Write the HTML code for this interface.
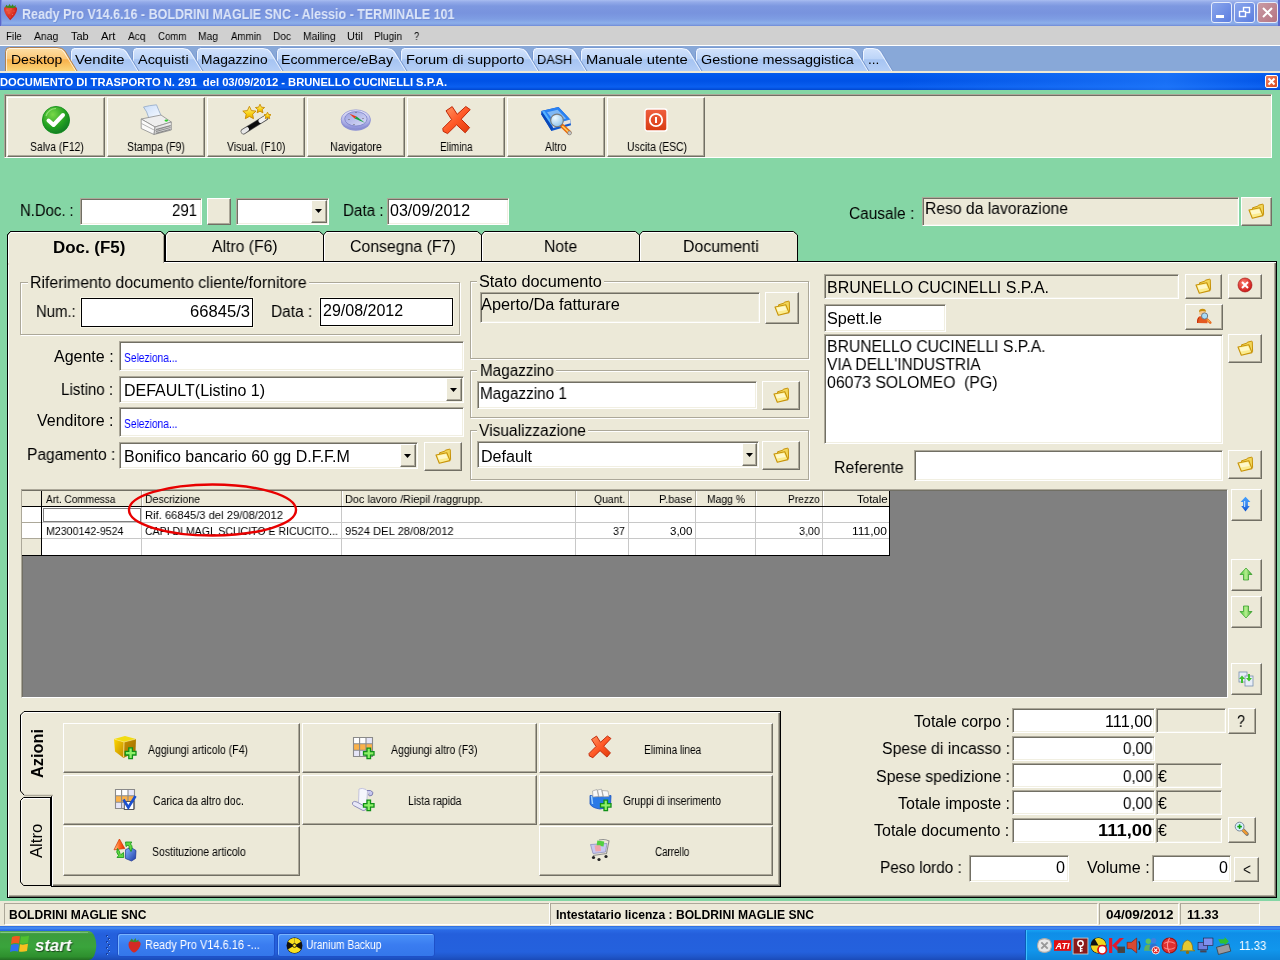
<!DOCTYPE html>
<html><head><meta charset="utf-8">
<style>
*{margin:0;padding:0;box-sizing:border-box}
html,body{width:1280px;height:960px;overflow:hidden;background:#85d6a5;font-family:"Liberation Sans",sans-serif;color:#000;position:relative}
.a{position:absolute}
.t{position:absolute;white-space:pre;line-height:1;will-change:transform}
.sk{position:absolute;background:#fff;border-top:1px solid #aca899;border-left:1px solid #aca899;border-bottom:1px solid #fff;border-right:1px solid #fff;box-shadow:inset 1px 1px 0 #716f64,inset -1px -1px 0 #f1efe2}
.sk.g{background:#ece9d8}
.rb{position:absolute;background:#ece9d8;border-top:1px solid #fff;border-left:1px solid #fff;border-bottom:1px solid #716f64;border-right:1px solid #716f64;box-shadow:inset -1px -1px 0 #aca899}
svg{position:absolute;overflow:visible}
</style></head>
<body>
<div class="a" style="left:0px;top:0px;width:1280px;height:26px;background:linear-gradient(#a9bdf0 0,#94abe9 2px,#7d98e0 6px,#7893de 13px,#7e9de3 19px,#8cafea 23px,#7f9de0 25px,#6a86d6 26px)"></div>
<div class="a" style="left:0px;top:0px;width:1px;height:26px;background:#5a68cc"></div>
<div class="a" style="left:1px;top:0px;width:1px;height:26px;background:#7c90dc"></div>
<div class="a" style="left:1278px;top:0px;width:2px;height:26px;background:#5a68cc"></div>
<svg style="left:3px;top:3px" width="16" height="18" viewBox="0 0 16 18">
<defs><radialGradient id="sb" cx=".35" cy=".3" r=".8"><stop offset="0" stop-color="#f05a40"/><stop offset=".6" stop-color="#d82a20"/><stop offset="1" stop-color="#b01818"/></radialGradient></defs>
<path d="M1 5.5 Q1 3.8 3 3.8 L7 3.6 Q9 3.4 11 3.8 L12.6 4 Q14.3 4.3 14.1 6.2 Q13.6 11.2 7.2 17.2 Q1.6 11.5 1 6.8 Z" fill="url(#sb)"/>
<g fill="#f8b0a0" opacity=".6"><circle cx="4" cy="7" r=".5"/><circle cx="8" cy="6" r=".5"/><circle cx="11" cy="8" r=".5"/><circle cx="6" cy="10" r=".5"/><circle cx="9.5" cy="11.5" r=".5"/><circle cx="7" cy="14" r=".5"/></g>
<path d="M2 4.2 L3.5 1.8 L5 3.5 L6.5 1 L8 3.2 L9.8 1.2 L10.8 3.4 L12.8 2 L12.4 4.4 Q7 5.6 2 4.2Z" fill="#3a8a20"/>
</svg>
<div class="t" style="left:22px;top:5.65px;font:bold 14px 'Liberation Sans';color:#dde6f8;transform:scaleX(0.8934);transform-origin:0 0;text-shadow:1px 1px 0 rgba(90,116,196,.35);">Ready Pro V14.6.16 - BOLDRINI MAGLIE SNC - Alessio - TERMINALE 101</div>
<div class="a" style="left:1211px;top:2px;width:21px;height:21px;border:1px solid #e6ecfb;border-radius:3px;background:linear-gradient(135deg,#8aa6ec,#5b7de0)"></div>
<div class="a" style="left:1234px;top:2px;width:21px;height:21px;border:1px solid #e6ecfb;border-radius:3px;background:linear-gradient(135deg,#8aa6ec,#5b7de0)"></div>
<div class="a" style="left:1257px;top:2px;width:21px;height:21px;border:1px solid #e6ecfb;border-radius:3px;background:linear-gradient(135deg,#c99aa4,#b57482)"></div>
<div class="a" style="left:1216px;top:15px;width:8px;height:3px;background:#fff"></div>
<svg style="left:1234px;top:2px" width="21" height="21"><rect x="9.5" y="5.5" width="6" height="5" fill="none" stroke="#fff" stroke-width="1.4"/><rect x="5.5" y="9.5" width="6" height="5" fill="#6d8ce4" stroke="#fff" stroke-width="1.4"/></svg>
<svg style="left:1257px;top:2px" width="21" height="21"><path d="M6 6 L15 15 M15 6 L6 15" stroke="#fff" stroke-width="2"/></svg>
<div class="a" style="left:0px;top:26px;width:1280px;height:19px;background:#d0d0d0"></div>
<div class="a" style="left:0px;top:45px;width:1280px;height:1px;background:#fff"></div>
<div class="t" style="left:5.6px;top:30.19px;font:normal 11px 'Liberation Sans';color:#000;transform:scaleX(0.8914);transform-origin:0 0;">File</div>
<div class="t" style="left:33.7px;top:30.19px;font:normal 11px 'Liberation Sans';color:#000;transform:scaleX(0.9459);transform-origin:0 0;">Anag</div>
<div class="t" style="left:70.5px;top:30.19px;font:normal 11px 'Liberation Sans';color:#000;transform:scaleX(0.9867);transform-origin:0 0;">Tab</div>
<div class="t" style="left:100.5px;top:30.19px;font:normal 11px 'Liberation Sans';color:#000;transform:scaleX(1.0316);transform-origin:0 0;">Art</div>
<div class="t" style="left:127.5px;top:30.19px;font:normal 11px 'Liberation Sans';color:#000;transform:scaleX(0.9233);transform-origin:0 0;">Acq</div>
<div class="t" style="left:157.5px;top:30.19px;font:normal 11px 'Liberation Sans';color:#000;transform:scaleX(0.8800);transform-origin:0 0;">Comm</div>
<div class="t" style="left:198px;top:30.19px;font:normal 11px 'Liberation Sans';color:#000;transform:scaleX(0.9346);transform-origin:0 0;">Mag</div>
<div class="t" style="left:230.6px;top:30.19px;font:normal 11px 'Liberation Sans';color:#000;transform:scaleX(0.8882);transform-origin:0 0;">Ammin</div>
<div class="t" style="left:273px;top:30.19px;font:normal 11px 'Liberation Sans';color:#000;transform:scaleX(0.9202);transform-origin:0 0;">Doc</div>
<div class="t" style="left:303px;top:30.19px;font:normal 11px 'Liberation Sans';color:#000;transform:scaleX(0.9355);transform-origin:0 0;">Mailing</div>
<div class="t" style="left:346.8px;top:30.19px;font:normal 11px 'Liberation Sans';color:#000;transform:scaleX(0.9945);transform-origin:0 0;">Util</div>
<div class="t" style="left:374px;top:30.19px;font:normal 11px 'Liberation Sans';color:#000;transform:scaleX(0.9157);transform-origin:0 0;">Plugin</div>
<div class="t" style="left:414.3px;top:30.19px;font:normal 11px 'Liberation Sans';color:#000;transform:scaleX(0.8500);transform-origin:0 0;">?</div>
<div class="a" style="left:0px;top:46px;width:1280px;height:25px;background:#88a8d8"></div>
<div class="a" style="left:0px;top:71px;width:1280px;height:2px;background:#f0ead6"></div>
<svg style="left:0;top:46px" width="1280" height="26" viewBox="0 46 1280 26"><defs><linearGradient id="tb" x1="0" y1="0" x2="0" y2="1"><stop offset="0" stop-color="#d4e4fc"/><stop offset=".48" stop-color="#bcd4f8"/><stop offset=".52" stop-color="#a6c4f2"/><stop offset="1" stop-color="#b4cef6"/></linearGradient><linearGradient id="to" x1="0" y1="0" x2="0" y2="1"><stop offset="0" stop-color="#fde0a8"/><stop offset=".48" stop-color="#fcc878"/><stop offset=".52" stop-color="#f8b04a"/><stop offset="1" stop-color="#fbd67a"/></linearGradient></defs><path d="M862.5 71 L862.5 51.5 Q862.5 47.5 866.5 47.5 L873 47.5 Q878.5 47.5 881 51.0 L893 71 Z" fill="url(#tb)"/><path d="M863.5 71 L863.5 52.0 Q863.5 48.5 867 48.5 L873 48.5 Q878 48.5 880 52.0 L891.8 71" fill="none" stroke="#fff" stroke-opacity=".7" stroke-width="1"/><path d="M862.5 71 L862.5 51.5 Q862.5 47.5 866.5 47.5 L873 47.5 Q878.5 47.5 881 51.0 L893 71" fill="none" stroke="#7a9ad0" stroke-width="1"/><path d="M695.5 71 L695.5 51.5 Q695.5 47.5 699.5 47.5 L849 47.5 Q854.5 47.5 857 51.0 L869 71 Z" fill="url(#tb)"/><path d="M696.5 71 L696.5 52.0 Q696.5 48.5 700 48.5 L849 48.5 Q854 48.5 856 52.0 L867.8 71" fill="none" stroke="#fff" stroke-opacity=".7" stroke-width="1"/><path d="M695.5 71 L695.5 51.5 Q695.5 47.5 699.5 47.5 L849 47.5 Q854.5 47.5 857 51.0 L869 71" fill="none" stroke="#7a9ad0" stroke-width="1"/><path d="M580.5 71 L580.5 51.5 Q580.5 47.5 584.5 47.5 L682 47.5 Q687.5 47.5 690 51.0 L702 71 Z" fill="url(#tb)"/><path d="M581.5 71 L581.5 52.0 Q581.5 48.5 585 48.5 L682 48.5 Q687 48.5 689 52.0 L700.8 71" fill="none" stroke="#fff" stroke-opacity=".7" stroke-width="1"/><path d="M580.5 71 L580.5 51.5 Q580.5 47.5 584.5 47.5 L682 47.5 Q687.5 47.5 690 51.0 L702 71" fill="none" stroke="#7a9ad0" stroke-width="1"/><path d="M532.5 71 L532.5 51.5 Q532.5 47.5 536.5 47.5 L567 47.5 Q572.5 47.5 575 51.0 L587 71 Z" fill="url(#tb)"/><path d="M533.5 71 L533.5 52.0 Q533.5 48.5 537 48.5 L567 48.5 Q572 48.5 574 52.0 L585.8 71" fill="none" stroke="#fff" stroke-opacity=".7" stroke-width="1"/><path d="M532.5 71 L532.5 51.5 Q532.5 47.5 536.5 47.5 L567 47.5 Q572.5 47.5 575 51.0 L587 71" fill="none" stroke="#7a9ad0" stroke-width="1"/><path d="M400.5 71 L400.5 51.5 Q400.5 47.5 404.5 47.5 L519 47.5 Q524.5 47.5 527 51.0 L539 71 Z" fill="url(#tb)"/><path d="M401.5 71 L401.5 52.0 Q401.5 48.5 405 48.5 L519 48.5 Q524 48.5 526 52.0 L537.8 71" fill="none" stroke="#fff" stroke-opacity=".7" stroke-width="1"/><path d="M400.5 71 L400.5 51.5 Q400.5 47.5 404.5 47.5 L519 47.5 Q524.5 47.5 527 51.0 L539 71" fill="none" stroke="#7a9ad0" stroke-width="1"/><path d="M276.5 71 L276.5 51.5 Q276.5 47.5 280.5 47.5 L387 47.5 Q392.5 47.5 395 51.0 L407 71 Z" fill="url(#tb)"/><path d="M277.5 71 L277.5 52.0 Q277.5 48.5 281 48.5 L387 48.5 Q392 48.5 394 52.0 L405.8 71" fill="none" stroke="#fff" stroke-opacity=".7" stroke-width="1"/><path d="M276.5 71 L276.5 51.5 Q276.5 47.5 280.5 47.5 L387 47.5 Q392.5 47.5 395 51.0 L407 71" fill="none" stroke="#7a9ad0" stroke-width="1"/><path d="M196.5 71 L196.5 51.5 Q196.5 47.5 200.5 47.5 L263 47.5 Q268.5 47.5 271 51.0 L283 71 Z" fill="url(#tb)"/><path d="M197.5 71 L197.5 52.0 Q197.5 48.5 201 48.5 L263 48.5 Q268 48.5 270 52.0 L281.8 71" fill="none" stroke="#fff" stroke-opacity=".7" stroke-width="1"/><path d="M196.5 71 L196.5 51.5 Q196.5 47.5 200.5 47.5 L263 47.5 Q268.5 47.5 271 51.0 L283 71" fill="none" stroke="#7a9ad0" stroke-width="1"/><path d="M132.5 71 L132.5 51.5 Q132.5 47.5 136.5 47.5 L183 47.5 Q188.5 47.5 191 51.0 L203 71 Z" fill="url(#tb)"/><path d="M133.5 71 L133.5 52.0 Q133.5 48.5 137 48.5 L183 48.5 Q188 48.5 190 52.0 L201.8 71" fill="none" stroke="#fff" stroke-opacity=".7" stroke-width="1"/><path d="M132.5 71 L132.5 51.5 Q132.5 47.5 136.5 47.5 L183 47.5 Q188.5 47.5 191 51.0 L203 71" fill="none" stroke="#7a9ad0" stroke-width="1"/><path d="M70.5 71 L70.5 51.5 Q70.5 47.5 74.5 47.5 L119 47.5 Q124.5 47.5 127 51.0 L139 71 Z" fill="url(#tb)"/><path d="M71.5 71 L71.5 52.0 Q71.5 48.5 75 48.5 L119 48.5 Q124 48.5 126 52.0 L137.8 71" fill="none" stroke="#fff" stroke-opacity=".7" stroke-width="1"/><path d="M70.5 71 L70.5 51.5 Q70.5 47.5 74.5 47.5 L119 47.5 Q124.5 47.5 127 51.0 L139 71" fill="none" stroke="#7a9ad0" stroke-width="1"/><path d="M5.5 71 L5.5 51.5 Q5.5 47.5 9.5 47.5 L57 47.5 Q62.5 47.5 65 51.0 L77 71 Z" fill="url(#to)"/><path d="M6.5 71 L6.5 52.0 Q6.5 48.5 10 48.5 L57 48.5 Q62 48.5 64 52.0 L75.8 71" fill="none" stroke="#fff" stroke-opacity=".7" stroke-width="1"/><path d="M5.5 71 L5.5 51.5 Q5.5 47.5 9.5 47.5 L57 47.5 Q62.5 47.5 65 51.0 L77 71" fill="none" stroke="#b08050" stroke-width="1"/></svg>
<div class="t" style="left:10.5px;top:51.50px;font:normal 13px 'Liberation Sans';color:#000;transform:scaleX(1.0778);transform-origin:0 0;">Desktop</div>
<div class="t" style="left:75px;top:51.50px;font:normal 13px 'Liberation Sans';color:#000;transform:scaleX(1.1412);transform-origin:0 0;">Vendite</div>
<div class="t" style="left:138px;top:51.50px;font:normal 13px 'Liberation Sans';color:#000;transform:scaleX(1.1116);transform-origin:0 0;">Acquisti</div>
<div class="t" style="left:201.4px;top:51.50px;font:normal 13px 'Liberation Sans';color:#000;transform:scaleX(1.0594);transform-origin:0 0;">Magazzino</div>
<div class="t" style="left:281px;top:51.50px;font:normal 13px 'Liberation Sans';color:#000;transform:scaleX(1.0917);transform-origin:0 0;">Ecommerce/eBay</div>
<div class="t" style="left:406px;top:51.50px;font:normal 13px 'Liberation Sans';color:#000;transform:scaleX(1.1224);transform-origin:0 0;">Forum di supporto</div>
<div class="t" style="left:537px;top:51.50px;font:normal 13px 'Liberation Sans';color:#000;transform:scaleX(0.9746);transform-origin:0 0;">DASH</div>
<div class="t" style="left:585.5px;top:51.50px;font:normal 13px 'Liberation Sans';color:#000;transform:scaleX(1.1348);transform-origin:0 0;">Manuale utente</div>
<div class="t" style="left:700.5px;top:51.50px;font:normal 13px 'Liberation Sans';color:#000;transform:scaleX(1.1064);transform-origin:0 0;">Gestione messaggistica</div>
<div class="t" style="left:867.6px;top:51.50px;font:normal 13px 'Liberation Sans';color:#000;transform:scaleX(1.0521);transform-origin:0 0;">...</div>
<div class="a" style="left:0px;top:73px;width:1280px;height:17px;background:linear-gradient(#0a5fe8 0,#0058ee 2px,#0052e6 8px,#0a5ff0 14px,#0047d0 17px)"></div>
<div class="a" style="left:900px;top:73px;width:380px;height:17px;background:linear-gradient(90deg,rgba(0,102,255,0) 0,rgba(40,130,255,.6) 70%,rgba(0,90,240,0) 100%)"></div>
<div class="t" style="left:0px;top:76.19px;font:bold 11px 'Liberation Sans';color:#fff;transform:scaleX(1.0171);transform-origin:0 0;">DOCUMENTO DI TRASPORTO N. 291  del 03/09/2012 - BRUNELLO CUCINELLI S.P.A.</div>
<div class="a" style="left:1265px;top:75px;width:13px;height:13px;border:1px solid #fff;border-radius:2px;background:linear-gradient(135deg,#f08060,#d84a20)"></div>
<svg style="left:1265px;top:75px" width="13" height="13"><path d="M3.5 3.5 L9.5 9.5 M9.5 3.5 L3.5 9.5" stroke="#fff" stroke-width="2"/></svg>
<div class="a" style="left:4px;top:94px;width:1268px;height:64px;background:#ece9d8;border-top:1px solid #aca899;border-left:1px solid #aca899;border-bottom:1px solid #fff;border-right:1px solid #fff;box-shadow:inset 1px 1px 0 #716f64"></div>
<div class="rb" style="left:7px;top:97px;width:98px;height:60px;"></div>
<div class="t" style="left:29.5px;top:140.34px;font:normal 12px 'Liberation Sans';color:#000;transform:scaleX(0.8691);transform-origin:0 0;">Salva (F12)</div>
<div class="rb" style="left:107px;top:97px;width:98px;height:60px;"></div>
<div class="t" style="left:127px;top:140.34px;font:normal 12px 'Liberation Sans';color:#000;transform:scaleX(0.8668);transform-origin:0 0;">Stampa (F9)</div>
<div class="rb" style="left:207px;top:97px;width:98px;height:60px;"></div>
<div class="t" style="left:227px;top:140.34px;font:normal 12px 'Liberation Sans';color:#000;transform:scaleX(0.8613);transform-origin:0 0;">Visual. (F10)</div>
<div class="rb" style="left:307px;top:97px;width:98px;height:60px;"></div>
<div class="t" style="left:330px;top:140.34px;font:normal 12px 'Liberation Sans';color:#000;transform:scaleX(0.8961);transform-origin:0 0;">Navigatore</div>
<div class="rb" style="left:407px;top:97px;width:98px;height:60px;"></div>
<div class="t" style="left:439.5px;top:140.34px;font:normal 12px 'Liberation Sans';color:#000;transform:scaleX(0.8260);transform-origin:0 0;">Elimina</div>
<div class="rb" style="left:507px;top:97px;width:98px;height:60px;"></div>
<div class="t" style="left:544.9px;top:140.34px;font:normal 12px 'Liberation Sans';color:#000;transform:scaleX(0.8633);transform-origin:0 0;">Altro</div>
<div class="rb" style="left:607px;top:97px;width:98px;height:60px;"></div>
<div class="t" style="left:626.5px;top:140.34px;font:normal 12px 'Liberation Sans';color:#000;transform:scaleX(0.8653);transform-origin:0 0;">Uscita (ESC)</div>
<svg style="left:40px;top:104px" width="32" height="32" viewBox="0 0 32 32">
<defs><radialGradient id="gc" cx=".38" cy=".3" r=".85"><stop offset="0" stop-color="#78d848"/><stop offset=".55" stop-color="#22a020"/><stop offset="1" stop-color="#0a6a28"/></radialGradient></defs>
<circle cx="16" cy="16" r="13.6" fill="url(#gc)" stroke="#0a8a14" stroke-width=".8"/><path d="M6 12 A11 11 0 0 1 16 4.5" stroke="#a8f090" stroke-width="1.2" fill="none" opacity=".7"/>
<path d="M8.5 16.5 L13.5 21 L23 11" stroke="#fff" stroke-width="4" fill="none" stroke-linecap="round" stroke-linejoin="round"/>
</svg>
<svg style="left:138px;top:102px" width="36" height="36" viewBox="138 102 36 36"><defs><linearGradient id="pp" x1="0" y1="0" x2="1" y2="1"><stop offset="0" stop-color="#c8dcf8"/><stop offset="1" stop-color="#f8fbff"/></linearGradient><linearGradient id="pf" x1="0" y1="0" x2="0" y2="1"><stop offset="0" stop-color="#f4f4f4"/><stop offset="1" stop-color="#c8c8c8"/></linearGradient></defs><path d="M143.5 107 Q149 105.5 156.5 104.8 Q158.5 110 161.5 116.5 L149 118.5 Q147 111 143.5 107Z" fill="url(#pp)" stroke="#90a8c8" stroke-width=".8"/><path d="M141.2 119 L161 115 L171.3 122 L155 127 Z" fill="#eeeeee" stroke="#8c8c8c" stroke-width=".8"/><path d="M141.2 119 L155 127 L154 134.5 L141.2 128.5 Z" fill="#fafafa" stroke="#8c8c8c" stroke-width=".8"/><path d="M155 127 L171.3 122 L171.3 130 L154 134.5 Z" fill="url(#pf)" stroke="#8c8c8c" stroke-width=".8"/><path d="M141.5 123.5 L155 130.5 L171 125.8" fill="none" stroke="#a0a0a0" stroke-width=".8"/><path d="M156 129.5 L170.5 125.5 M156 131.5 L170.5 127.5 M156 133.3 L170.5 129.3" stroke="#6a6a6a" stroke-width=".7"/><ellipse cx="166.3" cy="120.6" rx="1.8" ry="1.1" fill="#30d030"/></svg>
<svg style="left:238px;top:102px" width="36" height="36" viewBox="238 102 36 36"><defs><linearGradient id="sg" x1="0" y1="0" x2="0" y2="1"><stop offset="0" stop-color="#fff8a0"/><stop offset=".6" stop-color="#f8d010"/><stop offset="1" stop-color="#e8a800"/></linearGradient></defs><path d="M243.5 131.5 L265.5 117.8" stroke="#505050" stroke-width="5.6" stroke-linecap="round"/><path d="M243.5 131.5 L265.5 117.8" stroke="#0c0c0c" stroke-width="4.2" stroke-linecap="round"/><path d="M243.3 131.6 L247 129.3" stroke="#e8e8e8" stroke-width="4.2" stroke-linecap="round"/><path d="M260.5 120.9 L265.5 117.8" stroke="#f0f0f0" stroke-width="4.2" stroke-linecap="round"/><path d="M249.4 106.3 L251.4 110.6 L256 111.1 L252.6 114.2 L253.5 118.7 L249.4 116.4 L245.3 118.7 L246.2 114.2 L242.8 111.1 L247.4 110.6 Z" fill="url(#sg)" stroke="#c88a00" stroke-width=".9" stroke-linejoin="round"/><path d="M260 104.2 L261.4 107.2 L264.6 107.5 L262.2 109.6 L262.9 112.8 L260 111.2 L257.1 112.8 L257.8 109.6 L255.4 107.5 L258.6 107.2 Z" fill="url(#sg)" stroke="#c88a00" stroke-width=".9" stroke-linejoin="round"/><path d="M267.5 112.2 L268.6 114.5 L271 114.7 L269.2 116.3 L269.7 118.7 L267.5 117.5 L265.3 118.7 L265.8 116.3 L264 114.7 L266.4 114.5 Z" fill="url(#sg)" stroke="#c88a00" stroke-width=".9" stroke-linejoin="round"/></svg>
<svg style="left:338px;top:104px" width="36" height="30" viewBox="338 104 36 30"><defs><linearGradient id="cp" x1="0" y1="0" x2="0" y2="1"><stop offset="0" stop-color="#e8e8fc"/><stop offset="1" stop-color="#8a8ed8"/></linearGradient><linearGradient id="cd" x1="0" y1="0" x2="1" y2="1"><stop offset="0" stop-color="#9aa0e0"/><stop offset="1" stop-color="#dcdef8"/></linearGradient></defs><ellipse cx="355.8" cy="120.6" rx="14.8" ry="10.2" fill="#8c90d4"/><ellipse cx="355.8" cy="119.4" rx="14.6" ry="9.6" fill="url(#cp)" stroke="#8a8ed0" stroke-width=".7"/><ellipse cx="355.9" cy="118.8" rx="11.2" ry="7.2" fill="url(#cd)" stroke="#7a80c8" stroke-width=".8"/><path d="M349.5 113.8 L356.5 116.6 L354.6 118.4 Z" fill="#e83818"/><path d="M356.5 116.6 L364.8 122.8 L354.6 118.4 Z" fill="#18a040"/><circle cx="356" cy="112.5" r=".6" fill="#555"/><circle cx="363" cy="118.5" r=".6" fill="#555"/><circle cx="349" cy="119.5" r=".6" fill="#555"/><circle cx="354" cy="124.5" r=".6" fill="#555"/></svg>
<svg style="left:440px;top:104px" width="34" height="32" viewBox="440 104 34 32"><defs><linearGradient id="xg" x1="0" y1="0" x2="1" y2="1"><stop offset="0" stop-color="#ff9a68"/><stop offset=".5" stop-color="#ff5a28"/><stop offset="1" stop-color="#e03808"/></linearGradient></defs><path d="M446 110.8 L452.2 106.6 L457.2 114.3 L465.8 106.5 L470.2 109.6 L461.2 119.2 L469.6 127.6 L465.2 132.8 L456.6 124.8 L447.6 133.6 L443.2 131.4 L442.8 128.4 L451.6 119.6 Z" fill="url(#xg)" stroke="#c02808" stroke-width="1" stroke-linejoin="round"/></svg>
<svg style="left:538px;top:104px" width="36" height="32" viewBox="538 104 36 32"><defs><radialGradient id="lg" cx=".35" cy=".3" r=".8"><stop offset="0" stop-color="#f0faff"/><stop offset="1" stop-color="#88c0ea"/></radialGradient></defs><path d="M541.3 111 L558.5 107 L570.2 119.6 L571 125.3 L551.5 131 L541.3 114.5 Z" fill="#0f58d0"/><path d="M541.3 111 L558.5 107 L570.2 119.6 L552 124.5 Z" fill="#2a82f2"/><path d="M547 112.3 L557.6 109.8 L566.2 118.6 L554.6 121.6 Z" fill="#80b8f4"/><path d="M542.2 111.6 L544.4 111.1 L553.4 125 L551.6 125.6 Z" fill="#58b4ff"/><path d="M552 124.5 L570.2 119.6 L570.6 123.2 L553 128 Z" fill="#e4e4e4"/><path d="M541.3 114.5 L551.5 131 L553 128 L541.8 112" fill="#0a48b8"/><path d="M562.3 126 L569.3 132.6" stroke="#e86a10" stroke-width="4.4" stroke-linecap="round"/><path d="M562.3 126 L568.6 132" stroke="#ffd060" stroke-width="1.6"/><circle cx="569.6" cy="133" r="1.9" fill="#c8c8c8" stroke="#777" stroke-width=".6"/><circle cx="557" cy="120.4" r="6.3" fill="url(#lg)" stroke="#7a7a7a" stroke-width="1.1"/></svg>
<svg style="left:644px;top:108px" width="24" height="24" viewBox="0 0 24 24">
<defs><linearGradient id="pw" x1="0" y1="0" x2="0" y2="1"><stop offset="0" stop-color="#f06040"/><stop offset="1" stop-color="#d83a10"/></linearGradient></defs>
<rect x="1" y="1" width="22" height="22" rx="2.5" fill="url(#pw)" stroke="#fff" stroke-width="1.4"/>
<circle cx="12" cy="12" r="6.2" fill="none" stroke="#fff" stroke-width="1.8"/>
<path d="M12 9 L12 15" stroke="#fff" stroke-width="2"/>
</svg>
<div class="t" style="left:19.7px;top:201.96px;font:normal 16px 'Liberation Sans';color:#000;transform:scaleX(0.9292);transform-origin:0 0;">N.Doc. :</div>
<div class="sk" style="left:80px;top:198px;width:122px;height:27px;background:#fff;"></div>
<div class="t" style="left:172px;top:201.96px;font:normal 16px 'Liberation Sans';color:#000;transform:scaleX(0.9365);transform-origin:0 0;">291</div>
<div class="rb" style="left:207px;top:198px;width:24px;height:27px;"></div>
<div class="sk" style="left:236px;top:198px;width:93px;height:27px;background:#fff;"></div>
<div class="rb" style="left:311px;top:200px;width:16px;height:23px;"></div>
<svg style="left:315px;top:209px" width="8" height="5"><path d="M0 0 L7 0 L3.5 4Z" fill="#000"/></svg>
<div class="t" style="left:342.5px;top:201.96px;font:normal 16px 'Liberation Sans';color:#000;transform:scaleX(0.9488);transform-origin:0 0;">Data :</div>
<div class="sk" style="left:387px;top:198px;width:122px;height:27px;background:#fff;"></div>
<div class="t" style="left:390px;top:201.96px;font:normal 16px 'Liberation Sans';color:#000;">03/09/2012</div>
<div class="t" style="left:848.75px;top:204.96px;font:normal 16px 'Liberation Sans';color:#000;transform:scaleX(0.9653);transform-origin:0 0;">Causale :</div>
<div class="sk" style="left:922px;top:197px;width:317px;height:29px;background:#ece9d8;"></div>
<div class="t" style="left:925px;top:199.96px;font:normal 16px 'Liberation Sans';color:#000;transform:scaleX(0.9803);transform-origin:0 0;">Reso da lavorazione</div>
<div class="rb" style="left:1241px;top:197px;width:31px;height:29px;"></div>
<svg style="left:1248px;top:203px" width="18" height="17" viewBox="0 0 18 17">
<path d="M4.5 4.8 L9.8 3.2 L10.4 2.2 L14.4 1.2 Q15.3 1 15.3 2 L15.6 11.6 L6 14.2 Z" fill="#f2d658" stroke="#c8940a" stroke-width="1"/>
<path d="M1 7 L11.8 4.8 L15 12.6 L4.3 15.3 Z" fill="#fbec8e" stroke="#c8940a" stroke-width="1.1" stroke-linejoin="round"/>
<path d="M2.6 7.8 L11 6.2 L12.6 10 L3.8 11.6Z" fill="#fffbd8" opacity=".8"/>
</svg>
<svg style="left:165px;top:231px" width="159" height="31"><path d="M0.5 30.5 L0.5 4 L3.5 0.5 L154.5 0.5 L158.5 4 L158.5 30.5" fill="#ece9d8" stroke="#000" stroke-width="1"/><path d="M1.5 30 L1.5 4.5 L4 1.5 L154 1.5" fill="none" stroke="#fff" stroke-width="1"/></svg>
<div class="t" style="left:211.7px;top:237.96px;font:normal 16px 'Liberation Sans';color:#000;transform:scaleX(0.9839);transform-origin:0 0;">Altro (F6)</div>
<svg style="left:323px;top:231px" width="159" height="31"><path d="M0.5 30.5 L0.5 4 L3.5 0.5 L154.5 0.5 L158.5 4 L158.5 30.5" fill="#ece9d8" stroke="#000" stroke-width="1"/><path d="M1.5 30 L1.5 4.5 L4 1.5 L154 1.5" fill="none" stroke="#fff" stroke-width="1"/></svg>
<div class="t" style="left:350.4px;top:237.96px;font:normal 16px 'Liberation Sans';color:#000;transform:scaleX(0.9895);transform-origin:0 0;">Consegna (F7)</div>
<svg style="left:481px;top:231px" width="159" height="31"><path d="M0.5 30.5 L0.5 4 L3.5 0.5 L154.5 0.5 L158.5 4 L158.5 30.5" fill="#ece9d8" stroke="#000" stroke-width="1"/><path d="M1.5 30 L1.5 4.5 L4 1.5 L154 1.5" fill="none" stroke="#fff" stroke-width="1"/></svg>
<div class="t" style="left:544.4px;top:237.96px;font:normal 16px 'Liberation Sans';color:#000;transform:scaleX(0.9794);transform-origin:0 0;">Note</div>
<svg style="left:639px;top:231px" width="159" height="31"><path d="M0.5 30.5 L0.5 4 L3.5 0.5 L154.5 0.5 L158.5 4 L158.5 30.5" fill="#ece9d8" stroke="#000" stroke-width="1"/><path d="M1.5 30 L1.5 4.5 L4 1.5 L154 1.5" fill="none" stroke="#fff" stroke-width="1"/></svg>
<div class="t" style="left:683px;top:237.96px;font:normal 16px 'Liberation Sans';color:#000;transform:scaleX(0.9905);transform-origin:0 0;">Documenti</div>
<div class="a" style="left:7px;top:261px;width:1270px;height:637px;background:#ece9d8;border:1px solid #000;box-shadow:inset 1px 1px 0 #fff,inset -1px -1px 0 #716f64,inset -2px -2px 0 #aca899"></div>
<div class="a" style="left:9px;top:240px;width:154px;height:25px;background:#ece9d8"></div>
<svg style="left:7px;top:231px" width="159" height="34"><path d="M0.5 34 L0.5 4 L3.5 0.5 L154 0.5 L157.5 4 L157.5 31" fill="none" stroke="#000" stroke-width="1"/><path d="M1 34 L1 4 L3.5 1 L154 1 L157 4 L157 34Z" fill="#ece9d8"/><path d="M0.5 34 L0.5 4 L3.5 0.5 L154 0.5 L157.5 4 L157.5 31" fill="none" stroke="#000" stroke-width="1"/><path d="M1.5 32 L1.5 4.5 L4 1.5 L153.5 1.5" fill="none" stroke="#fff" stroke-width="1"/><path d="M156.5 4.5 L156.5 32" stroke="#aca899" stroke-width="1"/></svg>
<div class="t" style="left:52.9px;top:238.96px;font:bold 16px 'Liberation Sans';color:#000;transform:scaleX(1.0563);transform-origin:0 0;">Doc. (F5)</div>
<div class="a" style="left:21px;top:283px;width:440px;height:53px;border:1px solid #fff"></div>
<div class="a" style="left:20px;top:282px;width:440px;height:53px;border:1px solid #aca899"></div>
<div class="a" style="left:28px;top:274px;width:281px;height:16px;background:#ece9d8"></div>
<div class="t" style="left:30.3px;top:273.96px;font:normal 16px 'Liberation Sans';color:#000;transform:scaleX(0.9909);transform-origin:0 0;">Riferimento documento cliente/fornitore</div>
<div class="t" style="left:36.3px;top:302.96px;font:normal 16px 'Liberation Sans';color:#000;transform:scaleX(0.9304);transform-origin:0 0;">Num.:</div>
<div class="a" style="left:81px;top:298px;width:172px;height:29px;background:#fff;border:1px solid #000;box-shadow:0 0 0 1px #f8f5e6"></div>
<div class="t" style="left:190px;top:302.96px;font:normal 16px 'Liberation Sans';color:#000;transform:scaleX(1.0374);transform-origin:0 0;">66845/3</div>
<div class="t" style="left:271.3px;top:302.96px;font:normal 16px 'Liberation Sans';color:#000;transform:scaleX(0.9652);transform-origin:0 0;">Data :</div>
<div class="a" style="left:320px;top:298px;width:133px;height:28px;background:#fff;border:1px solid #000;box-shadow:0 0 0 1px #f8f5e6"></div>
<div class="t" style="left:323px;top:301.96px;font:normal 16px 'Liberation Sans';color:#000;">29/08/2012</div>
<div class="t" style="left:53.75px;top:347.96px;font:normal 16px 'Liberation Sans';color:#000;">Agente :</div>
<div class="sk" style="left:119px;top:341px;width:345px;height:30px;background:#fff;"></div>
<div class="t" style="left:123.7px;top:351.34px;font:normal 12px 'Liberation Sans';color:#0000ff;transform:scaleX(0.8532);transform-origin:0 0;">Seleziona...</div>
<div class="t" style="left:61px;top:380.96px;font:normal 16px 'Liberation Sans';color:#000;transform:scaleX(0.9449);transform-origin:0 0;">Listino :</div>
<div class="sk" style="left:119px;top:376px;width:345px;height:27px;background:#fff;"></div>
<div class="t" style="left:124.1px;top:381.96px;font:normal 16px 'Liberation Sans';color:#000;">DEFAULT(Listino 1)</div>
<div class="rb" style="left:446px;top:378px;width:16px;height:23px;"></div>
<svg style="left:450.0px;top:388.0px" width="8" height="5"><path d="M0 0 L7 0 L3.5 4Z" fill="#000"/></svg>
<div class="t" style="left:36.9px;top:411.96px;font:normal 16px 'Liberation Sans';color:#000;">Venditore :</div>
<div class="sk" style="left:119px;top:407px;width:345px;height:30px;background:#fff;"></div>
<div class="t" style="left:123.7px;top:417.34px;font:normal 12px 'Liberation Sans';color:#0000ff;transform:scaleX(0.8532);transform-origin:0 0;">Seleziona...</div>
<div class="t" style="left:27.3px;top:445.96px;font:normal 16px 'Liberation Sans';color:#000;transform:scaleX(0.9733);transform-origin:0 0;">Pagamento :</div>
<div class="sk" style="left:119px;top:442px;width:299px;height:27px;background:#fff;"></div>
<div class="t" style="left:124px;top:447.96px;font:normal 16px 'Liberation Sans';color:#000;">Bonifico bancario 60 gg D.F.F.M</div>
<div class="rb" style="left:400px;top:444px;width:16px;height:23px;"></div>
<svg style="left:404.0px;top:454.0px" width="8" height="5"><path d="M0 0 L7 0 L3.5 4Z" fill="#000"/></svg>
<div class="rb" style="left:424px;top:442px;width:38px;height:29px;"></div>
<svg style="left:435px;top:448px" width="18" height="17" viewBox="0 0 18 17">
<path d="M4.5 4.8 L9.8 3.2 L10.4 2.2 L14.4 1.2 Q15.3 1 15.3 2 L15.6 11.6 L6 14.2 Z" fill="#f2d658" stroke="#c8940a" stroke-width="1"/>
<path d="M1 7 L11.8 4.8 L15 12.6 L4.3 15.3 Z" fill="#fbec8e" stroke="#c8940a" stroke-width="1.1" stroke-linejoin="round"/>
<path d="M2.6 7.8 L11 6.2 L12.6 10 L3.8 11.6Z" fill="#fffbd8" opacity=".8"/>
</svg>
<div class="a" style="left:471px;top:282px;width:339px;height:78px;border:1px solid #fff"></div>
<div class="a" style="left:470px;top:281px;width:339px;height:78px;border:1px solid #aca899"></div>
<div class="a" style="left:477px;top:273px;width:127px;height:17px;background:#ece9d8"></div>
<div class="t" style="left:479.1px;top:272.96px;font:normal 16px 'Liberation Sans';color:#000;transform:scaleX(1.0160);transform-origin:0 0;">Stato documento</div>
<div class="sk" style="left:480px;top:292px;width:280px;height:31px;background:#ece9d8;"></div>
<div class="t" style="left:481px;top:295.96px;font:normal 16px 'Liberation Sans';color:#000;transform:scaleX(1.0193);transform-origin:0 0;">Aperto/Da fatturare</div>
<div class="rb" style="left:765px;top:292px;width:34px;height:32px;"></div>
<svg style="left:774px;top:300px" width="18" height="17" viewBox="0 0 18 17">
<path d="M4.5 4.8 L9.8 3.2 L10.4 2.2 L14.4 1.2 Q15.3 1 15.3 2 L15.6 11.6 L6 14.2 Z" fill="#f2d658" stroke="#c8940a" stroke-width="1"/>
<path d="M1 7 L11.8 4.8 L15 12.6 L4.3 15.3 Z" fill="#fbec8e" stroke="#c8940a" stroke-width="1.1" stroke-linejoin="round"/>
<path d="M2.6 7.8 L11 6.2 L12.6 10 L3.8 11.6Z" fill="#fffbd8" opacity=".8"/>
</svg>
<div class="a" style="left:471px;top:371px;width:339px;height:48px;border:1px solid #fff"></div>
<div class="a" style="left:470px;top:370px;width:339px;height:48px;border:1px solid #aca899"></div>
<div class="a" style="left:477px;top:362px;width:79px;height:16px;background:#ece9d8"></div>
<div class="t" style="left:480.2px;top:361.96px;font:normal 16px 'Liberation Sans';color:#000;transform:scaleX(0.9538);transform-origin:0 0;">Magazzino</div>
<div class="sk" style="left:477px;top:381px;width:280px;height:28px;background:#fff;"></div>
<div class="t" style="left:480px;top:384.96px;font:normal 16px 'Liberation Sans';color:#000;transform:scaleX(0.9590);transform-origin:0 0;">Magazzino 1</div>
<div class="rb" style="left:762px;top:381px;width:38px;height:29px;"></div>
<svg style="left:773px;top:387px" width="18" height="17" viewBox="0 0 18 17">
<path d="M4.5 4.8 L9.8 3.2 L10.4 2.2 L14.4 1.2 Q15.3 1 15.3 2 L15.6 11.6 L6 14.2 Z" fill="#f2d658" stroke="#c8940a" stroke-width="1"/>
<path d="M1 7 L11.8 4.8 L15 12.6 L4.3 15.3 Z" fill="#fbec8e" stroke="#c8940a" stroke-width="1.1" stroke-linejoin="round"/>
<path d="M2.6 7.8 L11 6.2 L12.6 10 L3.8 11.6Z" fill="#fffbd8" opacity=".8"/>
</svg>
<div class="a" style="left:471px;top:431px;width:339px;height:50px;border:1px solid #fff"></div>
<div class="a" style="left:470px;top:430px;width:339px;height:50px;border:1px solid #aca899"></div>
<div class="a" style="left:477px;top:422px;width:111px;height:16px;background:#ece9d8"></div>
<div class="t" style="left:479px;top:421.96px;font:normal 16px 'Liberation Sans';color:#000;transform:scaleX(0.9728);transform-origin:0 0;">Visualizzazione</div>
<div class="sk" style="left:477px;top:441px;width:282px;height:27px;background:#fff;"></div>
<div class="t" style="left:481px;top:447.96px;font:normal 16px 'Liberation Sans';color:#000;transform:scaleX(1.0060);transform-origin:0 0;">Default</div>
<div class="rb" style="left:742px;top:443px;width:15px;height:23px;"></div>
<svg style="left:745.5px;top:453.0px" width="8" height="5"><path d="M0 0 L7 0 L3.5 4Z" fill="#000"/></svg>
<div class="rb" style="left:762px;top:441px;width:38px;height:29px;"></div>
<svg style="left:773px;top:447px" width="18" height="17" viewBox="0 0 18 17">
<path d="M4.5 4.8 L9.8 3.2 L10.4 2.2 L14.4 1.2 Q15.3 1 15.3 2 L15.6 11.6 L6 14.2 Z" fill="#f2d658" stroke="#c8940a" stroke-width="1"/>
<path d="M1 7 L11.8 4.8 L15 12.6 L4.3 15.3 Z" fill="#fbec8e" stroke="#c8940a" stroke-width="1.1" stroke-linejoin="round"/>
<path d="M2.6 7.8 L11 6.2 L12.6 10 L3.8 11.6Z" fill="#fffbd8" opacity=".8"/>
</svg>
<div class="sk" style="left:824px;top:274px;width:355px;height:25px;background:#ece9d8;"></div>
<div class="t" style="left:826.5px;top:278.96px;font:normal 16px 'Liberation Sans';color:#000;">BRUNELLO CUCINELLI S.P.A.</div>
<div class="rb" style="left:1185px;top:274px;width:37px;height:25px;"></div>
<svg style="left:1195px;top:278px" width="18" height="17" viewBox="0 0 18 17">
<path d="M4.5 4.8 L9.8 3.2 L10.4 2.2 L14.4 1.2 Q15.3 1 15.3 2 L15.6 11.6 L6 14.2 Z" fill="#f2d658" stroke="#c8940a" stroke-width="1"/>
<path d="M1 7 L11.8 4.8 L15 12.6 L4.3 15.3 Z" fill="#fbec8e" stroke="#c8940a" stroke-width="1.1" stroke-linejoin="round"/>
<path d="M2.6 7.8 L11 6.2 L12.6 10 L3.8 11.6Z" fill="#fffbd8" opacity=".8"/>
</svg>
<div class="rb" style="left:1228px;top:274px;width:34px;height:25px;"></div>
<svg style="left:1236px;top:276px" width="18" height="18" viewBox="0 0 18 18"><defs><radialGradient id="rx" cx=".4" cy=".35" r=".7"><stop offset="0" stop-color="#ff8070"/><stop offset="1" stop-color="#c81010"/></radialGradient></defs><circle cx="9" cy="9" r="7" fill="url(#rx)" stroke="#a01010" stroke-width=".6"/><path d="M6 6 L12 12 M12 6 L6 12" stroke="#fff" stroke-width="2"/></svg>
<div class="sk" style="left:824px;top:304px;width:122px;height:28px;background:#fff;"></div>
<div class="t" style="left:827px;top:309.96px;font:normal 16px 'Liberation Sans';color:#000;transform:scaleX(1.0137);transform-origin:0 0;">Spett.le</div>
<div class="rb" style="left:1185px;top:304px;width:38px;height:26px;"></div>
<svg style="left:1195px;top:307px" width="18" height="18" viewBox="1195 307 18 18"><path d="M1197 323 Q1196.8 317.5 1199.5 316.2 L1205 316.5 Q1207.5 318 1207.5 323.2 Z" fill="#e45a22"/><path d="M1197.5 322.8 Q1197.5 319 1199 317.5" stroke="#c02808" stroke-width="1" fill="none"/><circle cx="1202.3" cy="312.6" r="3.2" fill="#f6c890"/><path d="M1199 312 Q1199 308.8 1202.6 308.8 Q1206 308.8 1206 311.8 Q1204 310.8 1201 311.2 Z" fill="#c8900c"/><path d="M1207 319.3 L1210.3 322.6" stroke="#e86a20" stroke-width="2.6" stroke-linecap="round"/><path d="M1207.3 319.6 L1209.8 322.1" stroke="#ffd050" stroke-width="1"/><circle cx="1204.6" cy="316" r="3.1" fill="#a8dcf8" stroke="#707a88" stroke-width="1"/></svg>
<div class="sk" style="left:824px;top:334px;width:399px;height:110px;background:#fff;"></div>
<div class="t" style="left:826.5px;top:337.96px;font:normal 16px 'Liberation Sans';color:#000;transform:scaleX(0.9842);transform-origin:0 0;">BRUNELLO CUCINELLI S.P.A.</div>
<div class="t" style="left:826.5px;top:355.96px;font:normal 16px 'Liberation Sans';color:#000;transform:scaleX(0.9684);transform-origin:0 0;">VIA DELL'INDUSTRIA</div>
<div class="t" style="left:826.5px;top:373.96px;font:normal 16px 'Liberation Sans';color:#000;transform:scaleX(0.9884);transform-origin:0 0;">06073 SOLOMEO  (PG)</div>
<div class="rb" style="left:1228px;top:334px;width:34px;height:29px;"></div>
<svg style="left:1237px;top:340px" width="18" height="17" viewBox="0 0 18 17">
<path d="M4.5 4.8 L9.8 3.2 L10.4 2.2 L14.4 1.2 Q15.3 1 15.3 2 L15.6 11.6 L6 14.2 Z" fill="#f2d658" stroke="#c8940a" stroke-width="1"/>
<path d="M1 7 L11.8 4.8 L15 12.6 L4.3 15.3 Z" fill="#fbec8e" stroke="#c8940a" stroke-width="1.1" stroke-linejoin="round"/>
<path d="M2.6 7.8 L11 6.2 L12.6 10 L3.8 11.6Z" fill="#fffbd8" opacity=".8"/>
</svg>
<div class="t" style="left:833.9px;top:458.96px;font:normal 16px 'Liberation Sans';color:#000;transform:scaleX(0.9920);transform-origin:0 0;">Referente</div>
<div class="sk" style="left:914px;top:450px;width:309px;height:31px;background:#fff;"></div>
<div class="rb" style="left:1228px;top:450px;width:34px;height:29px;"></div>
<svg style="left:1237px;top:456px" width="18" height="17" viewBox="0 0 18 17">
<path d="M4.5 4.8 L9.8 3.2 L10.4 2.2 L14.4 1.2 Q15.3 1 15.3 2 L15.6 11.6 L6 14.2 Z" fill="#f2d658" stroke="#c8940a" stroke-width="1"/>
<path d="M1 7 L11.8 4.8 L15 12.6 L4.3 15.3 Z" fill="#fbec8e" stroke="#c8940a" stroke-width="1.1" stroke-linejoin="round"/>
<path d="M2.6 7.8 L11 6.2 L12.6 10 L3.8 11.6Z" fill="#fffbd8" opacity=".8"/>
</svg>
<div class="a" style="left:21px;top:489px;width:1207px;height:209px;background:#808080;border-top:1px solid #aca899;border-left:1px solid #aca899;border-bottom:1px solid #fff;border-right:1px solid #fff;box-shadow:inset 1px 1px 0 #716f64"></div>
<div class="a" style="left:22px;top:491px;width:868px;height:65px;background:#fff;border-right:1px solid #000;border-bottom:1px solid #000"></div>
<div class="a" style="left:22px;top:491px;width:867px;height:15px;background:#ece9d8"></div>
<div class="a" style="left:22px;top:506px;width:867px;height:1px;background:#000"></div>
<div class="a" style="left:22px;top:491px;width:19px;height:64px;background:#ece9d8"></div>
<div class="a" style="left:22px;top:507px;width:19px;height:32px;background:#fff"></div>
<div class="a" style="left:141px;top:491px;width:1px;height:15px;background:#aca899"></div>
<div class="a" style="left:142px;top:491px;width:1px;height:15px;background:#fff"></div>
<div class="a" style="left:141px;top:507px;width:1px;height:48px;background:#c8c8c8"></div>
<div class="a" style="left:341px;top:491px;width:1px;height:15px;background:#aca899"></div>
<div class="a" style="left:342px;top:491px;width:1px;height:15px;background:#fff"></div>
<div class="a" style="left:341px;top:507px;width:1px;height:48px;background:#c8c8c8"></div>
<div class="a" style="left:575px;top:491px;width:1px;height:15px;background:#aca899"></div>
<div class="a" style="left:576px;top:491px;width:1px;height:15px;background:#fff"></div>
<div class="a" style="left:575px;top:507px;width:1px;height:48px;background:#c8c8c8"></div>
<div class="a" style="left:628px;top:491px;width:1px;height:15px;background:#aca899"></div>
<div class="a" style="left:629px;top:491px;width:1px;height:15px;background:#fff"></div>
<div class="a" style="left:628px;top:507px;width:1px;height:48px;background:#c8c8c8"></div>
<div class="a" style="left:695px;top:491px;width:1px;height:15px;background:#aca899"></div>
<div class="a" style="left:696px;top:491px;width:1px;height:15px;background:#fff"></div>
<div class="a" style="left:695px;top:507px;width:1px;height:48px;background:#c8c8c8"></div>
<div class="a" style="left:755px;top:491px;width:1px;height:15px;background:#aca899"></div>
<div class="a" style="left:756px;top:491px;width:1px;height:15px;background:#fff"></div>
<div class="a" style="left:755px;top:507px;width:1px;height:48px;background:#c8c8c8"></div>
<div class="a" style="left:822px;top:491px;width:1px;height:15px;background:#aca899"></div>
<div class="a" style="left:823px;top:491px;width:1px;height:15px;background:#fff"></div>
<div class="a" style="left:822px;top:507px;width:1px;height:48px;background:#c8c8c8"></div>
<div class="a" style="left:41px;top:491px;width:1px;height:64px;background:#000"></div>
<div class="a" style="left:22px;top:506px;width:20px;height:1px;background:#000"></div>
<div class="a" style="left:42px;top:522px;width:847px;height:1px;background:#c8c8c8"></div>
<div class="a" style="left:22px;top:522px;width:19px;height:1px;background:#aca899"></div>
<div class="a" style="left:42px;top:538px;width:847px;height:1px;background:#c8c8c8"></div>
<div class="a" style="left:22px;top:538px;width:19px;height:1px;background:#aca899"></div>
<svg style="left:43px;top:508px" width="99" height="15"><rect x="0.5" y="0.5" width="97" height="13" fill="none" stroke="#000" stroke-width="1" stroke-dasharray="1 1"/></svg>
<div class="t" style="left:45.5px;top:492.77px;font:normal 11.5px 'Liberation Sans';color:#000;transform:scaleX(0.8771);transform-origin:0 0;">Art. Commessa</div>
<div class="t" style="left:145.3px;top:492.77px;font:normal 11.5px 'Liberation Sans';color:#000;transform:scaleX(0.9155);transform-origin:0 0;">Descrizione</div>
<div class="t" style="left:345.3px;top:492.77px;font:normal 11.5px 'Liberation Sans';color:#000;transform:scaleX(0.9462);transform-origin:0 0;">Doc lavoro /Riepil /raggrupp.</div>
<div class="t" style="left:594px;top:492.77px;font:normal 11.5px 'Liberation Sans';color:#000;transform:scaleX(0.9038);transform-origin:0 0;">Quant.</div>
<div class="t" style="left:659.4px;top:492.77px;font:normal 11.5px 'Liberation Sans';color:#000;transform:scaleX(0.9644);transform-origin:0 0;">P.base</div>
<div class="t" style="left:707px;top:492.77px;font:normal 11.5px 'Liberation Sans';color:#000;transform:scaleX(0.9007);transform-origin:0 0;">Magg %</div>
<div class="t" style="left:787.8px;top:492.77px;font:normal 11.5px 'Liberation Sans';color:#000;transform:scaleX(0.8857);transform-origin:0 0;">Prezzo</div>
<div class="t" style="left:856.5px;top:492.77px;font:normal 11.5px 'Liberation Sans';color:#000;transform:scaleX(0.9874);transform-origin:0 0;">Totale</div>
<div class="t" style="left:145.3px;top:508.77px;font:normal 11.5px 'Liberation Sans';color:#000;transform:scaleX(0.9759);transform-origin:0 0;">Rif. 66845/3 del 29/08/2012</div>
<div class="t" style="left:45.6px;top:524.77px;font:normal 11.5px 'Liberation Sans';color:#000;transform:scaleX(0.9252);transform-origin:0 0;">M2300142-9524</div>
<div class="t" style="left:145.3px;top:524.77px;font:normal 11.5px 'Liberation Sans';color:#000;transform:scaleX(0.9158);transform-origin:0 0;">CAPI DI MAGL SCUCITO E RICUCITO...</div>
<div class="t" style="left:345.3px;top:524.77px;font:normal 11.5px 'Liberation Sans';color:#000;transform:scaleX(0.9750);transform-origin:0 0;">9524 DEL 28/08/2012</div>
<div class="t" style="left:613.4px;top:524.77px;font:normal 11.5px 'Liberation Sans';color:#000;transform:scaleX(0.9225);transform-origin:0 0;">37</div>
<div class="t" style="left:670.2px;top:524.77px;font:normal 11.5px 'Liberation Sans';color:#000;">3,00</div>
<div class="t" style="left:798.6px;top:524.77px;font:normal 11.5px 'Liberation Sans';color:#000;transform:scaleX(0.9338);transform-origin:0 0;">3,00</div>
<div class="t" style="left:851.9px;top:524.77px;font:normal 11.5px 'Liberation Sans';color:#000;transform:scaleX(1.0428);transform-origin:0 0;">111,00</div>
<svg style="left:0;top:0" width="1280" height="960"><ellipse cx="212.5" cy="510" rx="83.5" ry="25.5" fill="none" stroke="#e80000" stroke-width="2.4"/></svg>
<div class="rb" style="left:1231px;top:489px;width:31px;height:32px;"></div>
<svg style="left:1238px;top:494px" width="16" height="20" viewBox="1238 494 16 20"><defs><linearGradient id="bl" x1="0" y1="0" x2="0" y2="1"><stop offset="0" stop-color="#40a0ff"/><stop offset=".5" stop-color="#3a88f0"/><stop offset="1" stop-color="#0a50d0"/></linearGradient></defs><path d="M1245.5 496.8 L1250.4 501.9 L1247.9 501.9 L1247.9 506 L1249.8 506 L1245.5 511.4 L1241.2 506 L1243.1 506 L1243.1 501.9 L1240.6 501.9 Z" fill="url(#bl)"/><path d="M1244.6 501 L1244.6 507" stroke="#b8dcff" stroke-width="1.2"/></svg>
<div class="rb" style="left:1231px;top:559px;width:31px;height:32px;"></div>
<svg style="left:1238px;top:566px" width="16" height="18" viewBox="0 0 16 18"><defs><linearGradient id="gr" x1="0" x2="1"><stop offset="0" stop-color="#40c030"/><stop offset=".5" stop-color="#b8f090"/><stop offset="1" stop-color="#30a020"/></linearGradient></defs><path d="M8 2 L14 8.5 L10.5 8.5 L10.5 14 L5.5 14 L5.5 8.5 L2 8.5 Z" fill="url(#gr)" stroke="#2a9a20" stroke-width=".7"/></svg>
<div class="rb" style="left:1231px;top:596px;width:31px;height:32px;"></div>
<svg style="left:1238px;top:603px" width="16" height="18" viewBox="0 0 16 18"><path d="M8 15 L14 8.5 L10.5 8.5 L10.5 3 L5.5 3 L5.5 8.5 L2 8.5 Z" fill="url(#gr)" stroke="#2a9a20" stroke-width=".7"/></svg>
<div class="rb" style="left:1231px;top:663px;width:31px;height:32px;"></div>
<svg style="left:1237px;top:670px" width="18" height="18" viewBox="0 0 18 18"><rect x="2" y="2" width="8" height="10" fill="#e8eef8" stroke="#7890b0" stroke-width=".8"/><rect x="8" y="6" width="8" height="10" fill="#e8eef8" stroke="#7890b0" stroke-width=".8"/><path d="M4 13 L4 9 L2 9 L5 5.5 L8 9 L6 9 L6 13Z" fill="#40c030"/><path d="M13 4 L13 8 L15 8 L12 11.5 L9 8 L11 8 L11 4Z" fill="#40c030"/></svg>
<div class="a" style="left:51px;top:711px;width:730px;height:176px;background:#ece9d8;border:1px solid #000;box-shadow:inset 1px 1px 0 #fff,inset -1px -1px 0 #716f64,inset -2px -2px 0 #aca899"></div>
<svg style="left:20px;top:797px" width="32" height="90"><path d="M31 0.5 L3.5 0.5 L0.5 3.5 L0.5 85 L3.5 88.5 L31 88.5" fill="#ece9d8" stroke="#000" stroke-width="1"/><path d="M1.5 84.5 L1.5 4 L4 1.5 L30 1.5" fill="none" stroke="#fff"/><path d="M30.5 1 L30.5 88" stroke="#000" stroke-width="1"/></svg>
<svg style="left:20px;top:711px" width="34" height="90"><path d="M33 0.5 L4 0.5 L0.5 4 L0.5 80 L4 84 L33 84" fill="#ece9d8" stroke="none"/><path d="M33 0.5 L4 0.5 L0.5 4 L0.5 80 L4 84" fill="none" stroke="#000" stroke-width="1"/><path d="M1.5 79.5 L1.5 4.5 L4.5 1.5 L33 1.5" fill="none" stroke="#fff"/><path d="M4 84.5 L33 84.5" stroke="#aca899" stroke-width="1.5"/></svg>
<div class="t" style="left:0px;top:-13.04px;font:bold 16px 'Liberation Sans';color:#000;transform:rotate(-90deg) scaleX(1.02);transform-origin:0 0;left:29px;top:777.5px;">Azioni</div>
<div class="t" style="left:0px;top:-13.04px;font:normal 16px 'Liberation Sans';color:#000;transform:rotate(-90deg) scaleX(1.04);transform-origin:0 0;left:27.5px;top:857.5px;">Altro</div>
<div class="rb" style="left:63px;top:723px;width:237px;height:50px;"></div>
<div class="rb" style="left:302px;top:723px;width:235px;height:50px;"></div>
<div class="rb" style="left:539px;top:723px;width:234px;height:50px;"></div>
<div class="rb" style="left:63px;top:775px;width:237px;height:50px;"></div>
<div class="rb" style="left:302px;top:775px;width:235px;height:50px;"></div>
<div class="rb" style="left:539px;top:775px;width:234px;height:50px;"></div>
<div class="rb" style="left:63px;top:826px;width:237px;height:50px;"></div>
<div class="rb" style="left:539px;top:826px;width:234px;height:50px;"></div>
<div class="t" style="left:147.5px;top:743.34px;font:normal 12px 'Liberation Sans';color:#000;transform:scaleX(0.8768);transform-origin:0 0;">Aggiungi articolo (F4)</div>
<div class="t" style="left:391px;top:743.34px;font:normal 12px 'Liberation Sans';color:#000;transform:scaleX(0.8763);transform-origin:0 0;">Aggiungi altro (F3)</div>
<div class="t" style="left:643.75px;top:743.34px;font:normal 12px 'Liberation Sans';color:#000;transform:scaleX(0.8415);transform-origin:0 0;">Elimina linea</div>
<div class="t" style="left:152.5px;top:794.34px;font:normal 12px 'Liberation Sans';color:#000;transform:scaleX(0.8727);transform-origin:0 0;">Carica da altro doc.</div>
<div class="t" style="left:408.4px;top:794.34px;font:normal 12px 'Liberation Sans';color:#000;transform:scaleX(0.8624);transform-origin:0 0;">Lista rapida</div>
<div class="t" style="left:623.4px;top:794.34px;font:normal 12px 'Liberation Sans';color:#000;transform:scaleX(0.8579);transform-origin:0 0;">Gruppi di inserimento</div>
<div class="t" style="left:151.5px;top:845.34px;font:normal 12px 'Liberation Sans';color:#000;transform:scaleX(0.8725);transform-origin:0 0;">Sostituzione articolo</div>
<div class="t" style="left:654.7px;top:845.34px;font:normal 12px 'Liberation Sans';color:#000;transform:scaleX(0.8164);transform-origin:0 0;">Carrello</div>
<svg style="left:113px;top:735px" width="24" height="24" viewBox="0 0 24 24"><defs><linearGradient id="cl" x1="0" y1="0" x2="1" y2="1"><stop offset="0" stop-color="#ffd800"/><stop offset="1" stop-color="#c08800"/></linearGradient><linearGradient id="cr" x1="0" y1="0" x2="1" y2="1"><stop offset="0" stop-color="#c89000"/><stop offset="1" stop-color="#9a6a00"/></linearGradient></defs>
<path d="M1 4 L12 1 L23 4 L11 7 Z" fill="#f2dc10"/><path d="M1 4 L11 7 L10.5 23 L2 16.5 Z" fill="url(#cl)"/><path d="M11 7 L23 4 L22.5 17 L10.5 23 Z" fill="url(#cr)"/>
<path d="M11 7 L10.6 22" stroke="#ffe890" stroke-width=".8"/><path d="M1.5 4.2 L11 7 L22.5 4.2" stroke="#fff080" stroke-width=".6" fill="none"/>
<path d="M15.8 12.8 h3.6 v3.6 h3.6 v3.6 h-3.6 v3.6 h-3.6 v-3.6 h-3.6 v-3.6 h3.6 Z" fill="#8ef068" stroke="#109018" stroke-width="1.3" stroke-linejoin="miter"/></svg>
<svg style="left:352px;top:736px" width="24" height="24" viewBox="352 736 24 24"><rect x="353.5" y="737.5" width="19" height="19" fill="#fff"/><rect x="366" y="738" width="6" height="6" fill="#e6e6f8"/><rect x="354" y="750" width="18" height="6" fill="#e6e6f8"/><rect x="354" y="744" width="18" height="6" fill="#fbb24a"/><path d="M353.5 737.5 h19 v19 h-19 Z M353.5 743.8 h19 M353.5 750.2 h19 M359.6 737.5 v19 M366 737.5 v19" fill="none" stroke="#8a8a8a" stroke-width="1.1"/><path d="M367.0 748.1 h3.5 v3.5 h3.5 v3.5 h-3.5 v3.5 h-3.5 v-3.5 h-3.5 v-3.5 h3.5 Z" fill="#8ef068" stroke="#109018" stroke-width="1.3"/></svg>
<svg style="left:586px;top:734px" width="28" height="26" viewBox="586 734 28 26"><path d="M446 110.8 L452.2 106.6 L457.2 114.3 L465.8 106.5 L470.2 109.6 L461.2 119.2 L469.6 127.6 L465.2 132.8 L456.6 124.8 L447.6 133.6 L443.2 131.4 L442.8 128.4 L451.6 119.6 Z" fill="url(#xg)" stroke="#c02808" stroke-width="1.2" stroke-linejoin="round" transform="translate(589 736) scale(.8) translate(-442.8 -106.5)"/></svg>
<svg style="left:114px;top:788px" width="24" height="24" viewBox="114 788 24 24"><rect x="115.5" y="789.5" width="19" height="19" fill="#fff"/><rect x="128" y="790" width="6" height="6" fill="#e6e6f8"/><rect x="116" y="802" width="18" height="6" fill="#e6e6f8"/><rect x="116" y="796" width="18" height="6" fill="#fbb24a"/><path d="M115.5 789.5 h19 v19 h-19 Z M115.5 795.8 h19 M115.5 802.2 h19 M121.6 789.5 v19 M128 789.5 v19" fill="none" stroke="#8a8a8a" stroke-width="1.1"/><rect x="124.3" y="801.5" width="9.5" height="8" fill="#fff" stroke="#555" stroke-width="1"/><path d="M123.5 799.5 L128.3 807.5 L135.5 796" fill="none" stroke="#1a4fd0" stroke-width="2.6" stroke-linejoin="miter"/></svg>
<svg style="left:350px;top:786px" width="24" height="24" viewBox="350 786 24 24"><path d="M359 789 Q362 787.5 366 789.5 L367.5 791 L366.5 806 L358.5 804 Z" fill="#f6f6fc" stroke="#b8b8d8" stroke-width=".8"/><path d="M367 790.5 Q371 789.5 373 792.5 Q373 796 369.5 796 Q368 795 369 793.5" fill="#c8c8f0" stroke="#8080b0" stroke-width="1"/><path d="M352.5 802.5 Q354 800.5 357 802 L365 806.5 Q367 808 365.5 810 L363 810.5 L353.5 805.5 Q352 804.5 352.5 802.5Z" fill="#e8e8f8" stroke="#9090b8" stroke-width="1"/><path d="M367.0 800.1 h3.5 v3.5 h3.5 v3.5 h-3.5 v3.5 h-3.5 v-3.5 h-3.5 v-3.5 h3.5 Z" fill="#8ef068" stroke="#109018" stroke-width="1.3"/></svg>
<svg style="left:588px;top:788px" width="24" height="24" viewBox="588 788 24 24"><path d="M590 795.5 Q600 798 611 795.5 L610.5 805 Q606 809 600 809 Q592 808 590 804 Z" fill="#2a7ae6" stroke="#1650c0" stroke-width=".8"/><path d="M591.5 796 Q592 800 592.5 804" stroke="#9cd0ff" stroke-width="1.5" fill="none"/><path d="M592.5 791 L597 789.5 L598.5 796.5 L593 797 Z M597.5 790 L601.5 789.2 L603 796.5 L599 796.8Z M602 790.5 L608 791 L609 796.5 L603.5 796.8 Z" fill="#f8f8f8" stroke="#a0a0a0" stroke-width=".7"/><path d="M604.0 800.1 h3.5 v3.5 h3.5 v3.5 h-3.5 v3.5 h-3.5 v-3.5 h-3.5 v-3.5 h3.5 Z" fill="#8ef068" stroke="#109018" stroke-width="1.3"/></svg>
<svg style="left:112px;top:837px" width="24" height="24" viewBox="112 837 24 24"><defs><linearGradient id="rc" x1="0" x2="1"><stop offset="0" stop-color="#ffd090"/><stop offset=".5" stop-color="#ff6a20"/><stop offset="1" stop-color="#e82800"/></linearGradient><linearGradient id="bc" x1="0" y1="0" x2="1" y2="1"><stop offset="0" stop-color="#8ab8ff"/><stop offset="1" stop-color="#1a3aa8"/></linearGradient></defs><path d="M119.4 839 L124.8 848.5 L114 849.8 Z" fill="url(#rc)" stroke="#d03000" stroke-width=".7"/><path d="M125.6 849.6 L131 847.5 L136 850.5 L135.5 858.5 L131.5 861 L125.5 858.5 Z" fill="url(#bc)" stroke="#1a3090" stroke-width=".7"/><path d="M125.5 842 L131.8 842 L130.5 844 Q133.5 846.5 131 851.5 L129 848 Q129.5 846 128 845 L126 846.5Z" fill="#60d840" stroke="#109018" stroke-width=".8"/><path d="M123.8 857.5 L117 857.5 L118.5 855.5 Q115.5 852.5 117.5 848.5 L119.5 851.5 Q119.3 853.5 121 854.5 L123.5 852.5Z" fill="#60d840" stroke="#109018" stroke-width=".8"/></svg>
<svg style="left:588px;top:837px" width="24" height="24" viewBox="588 837 24 24"><path d="M590.5 844.5 L607 843.5 L605.5 852 L593 853.5 Z" fill="#c8c8f0" stroke="#9090c0" stroke-width=".8"/><rect x="597" y="841" width="7" height="5" fill="#50d040" transform="rotate(8 600 843)"/><path d="M594.5 845.5 L600.5 845 L601 851 L595.5 851.5Z" fill="#f4a0a0" opacity=".85"/><path d="M599 840 Q605 838.5 609 841 L606.5 853.5 L593 855.5" fill="none" stroke="#909090" stroke-width="1.1"/><circle cx="593.5" cy="857.5" r="1.6" fill="#222"/><circle cx="599" cy="859.5" r="1.6" fill="#222"/><circle cx="606" cy="856.5" r="1.6" fill="#222"/></svg>
<div class="t" style="left:913.9px;top:712.96px;font:normal 16px 'Liberation Sans';color:#000;">Totale corpo :</div>
<div class="sk" style="left:1012px;top:708px;width:143px;height:25px;background:#fff;"></div>
<div class="t" style="left:1104.7px;top:712.96px;font:normal 16px 'Liberation Sans';color:#000;transform:scaleX(1.0158);transform-origin:0 0;">111,00</div>
<div class="sk" style="left:1156px;top:708px;width:70px;height:25px;background:#ece9d8;"></div>
<div class="t" style="left:882px;top:739.96px;font:normal 16px 'Liberation Sans';color:#000;transform:scaleX(0.9857);transform-origin:0 0;">Spese di incasso :</div>
<div class="sk" style="left:1012px;top:736px;width:143px;height:25px;background:#fff;"></div>
<div class="t" style="left:1122.6px;top:739.96px;font:normal 16px 'Liberation Sans';color:#000;transform:scaleX(0.9441);transform-origin:0 0;">0,00</div>
<div class="t" style="left:876.1px;top:767.96px;font:normal 16px 'Liberation Sans';color:#000;transform:scaleX(0.9904);transform-origin:0 0;">Spese spedizione :</div>
<div class="sk" style="left:1012px;top:763px;width:143px;height:25px;background:#fff;"></div>
<div class="t" style="left:1122.6px;top:767.96px;font:normal 16px 'Liberation Sans';color:#000;transform:scaleX(0.9441);transform-origin:0 0;">0,00</div>
<div class="sk" style="left:1156px;top:763px;width:66px;height:25px;background:#ece9d8;"></div>
<div class="t" style="left:1158px;top:767.96px;font:normal 16px 'Liberation Sans';color:#000;transform:scaleX(0.9665);transform-origin:0 0;">€</div>
<div class="t" style="left:897.75px;top:794.96px;font:normal 16px 'Liberation Sans';color:#000;">Totale imposte :</div>
<div class="sk" style="left:1012px;top:790px;width:143px;height:25px;background:#fff;"></div>
<div class="t" style="left:1122.6px;top:794.96px;font:normal 16px 'Liberation Sans';color:#000;transform:scaleX(0.9441);transform-origin:0 0;">0,00</div>
<div class="sk" style="left:1156px;top:790px;width:66px;height:25px;background:#ece9d8;"></div>
<div class="t" style="left:1158px;top:794.96px;font:normal 16px 'Liberation Sans';color:#000;transform:scaleX(0.9665);transform-origin:0 0;">€</div>
<div class="t" style="left:874.4px;top:821.96px;font:normal 16px 'Liberation Sans';color:#000;">Totale documento :</div>
<div class="sk" style="left:1012px;top:818px;width:143px;height:25px;background:#fff;"></div>
<div class="t" style="left:1097.8px;top:821.96px;font:bold 16px 'Liberation Sans';color:#000;transform:scaleX(1.1490);transform-origin:0 0;">111,00</div>
<div class="sk" style="left:1156px;top:818px;width:66px;height:25px;background:#ece9d8;"></div>
<div class="t" style="left:1158px;top:821.96px;font:normal 16px 'Liberation Sans';color:#000;transform:scaleX(0.9665);transform-origin:0 0;">€</div>
<div class="rb" style="left:1228px;top:708px;width:28px;height:26px;"></div>
<div class="t" style="left:1237.4px;top:712.96px;font:normal 16px 'Liberation Sans';color:#000;transform:scaleX(0.8990);transform-origin:0 0;">?</div>
<div class="rb" style="left:1228px;top:817px;width:28px;height:26px;"></div>
<svg style="left:1232px;top:819px" width="20" height="20" viewBox="1232 819 20 20"><path d="M1242.6 829.6 L1247 834" stroke="#707070" stroke-width="3.6" stroke-linecap="round"/><path d="M1242.6 829.6 L1246.6 833.6" stroke="#f09a30" stroke-width="2.4" stroke-linecap="round"/><circle cx="1239.6" cy="826.6" r="4.4" fill="#d8f0ff" stroke="#7a8a9a" stroke-width="1"/><path d="M1237.3 826.6 H1241.9" stroke="#10a010" stroke-width="1.6"/><path d="M1239.6 824.3 V828.9" stroke="#10a010" stroke-width="1.6"/></svg>
<div class="t" style="left:880.2px;top:858.96px;font:normal 16px 'Liberation Sans';color:#000;transform:scaleX(0.9580);transform-origin:0 0;">Peso lordo :</div>
<div class="sk" style="left:969px;top:855px;width:100px;height:27px;background:#fff;"></div>
<div class="t" style="left:1056px;top:858.96px;font:normal 16px 'Liberation Sans';color:#000;transform:scaleX(1.0114);transform-origin:0 0;">0</div>
<div class="t" style="left:1086.8px;top:858.96px;font:normal 16px 'Liberation Sans';color:#000;transform:scaleX(1.0055);transform-origin:0 0;">Volume :</div>
<div class="sk" style="left:1152px;top:855px;width:79px;height:27px;background:#fff;"></div>
<div class="t" style="left:1219px;top:858.96px;font:normal 16px 'Liberation Sans';color:#000;transform:scaleX(0.9889);transform-origin:0 0;">0</div>
<div class="rb" style="left:1234px;top:857px;width:25px;height:25px;"></div>
<div class="t" style="left:1243px;top:860.96px;font:normal 16px 'Liberation Sans';color:#000;transform:scaleX(0.8348);transform-origin:0 0;">&lt;</div>
<div class="a" style="left:0px;top:901px;width:1280px;height:25px;background:#ece9d8"></div>
<div class="a" style="left:4px;top:903px;width:1094px;height:22px;border-top:1px solid #aca899;border-left:1px solid #aca899;border-bottom:1px solid #fff;border-right:1px solid #fff"></div>
<div class="a" style="left:1099px;top:903px;width:80px;height:22px;border-top:1px solid #aca899;border-left:1px solid #aca899;border-bottom:1px solid #fff;border-right:1px solid #fff"></div>
<div class="a" style="left:1180px;top:903px;width:80px;height:22px;border-top:1px solid #aca899;border-left:1px solid #aca899;border-bottom:1px solid #fff;border-right:1px solid #fff"></div>
<div class="a" style="left:549px;top:903px;width:1px;height:22px;background:#fff"></div>
<div class="a" style="left:550px;top:903px;width:1px;height:22px;background:#aca899"></div>
<div class="t" style="left:8.5px;top:908.34px;font:bold 12px 'Liberation Sans';color:#000;transform:scaleX(1.0061);transform-origin:0 0;">BOLDRINI MAGLIE SNC</div>
<div class="t" style="left:556px;top:908.34px;font:bold 12px 'Liberation Sans';color:#000;transform:scaleX(1.0103);transform-origin:0 0;">Intestatario licenza : BOLDRINI MAGLIE SNC</div>
<div class="t" style="left:1105.8px;top:908.34px;font:bold 12px 'Liberation Sans';color:#000;transform:scaleX(1.1256);transform-origin:0 0;">04/09/2012</div>
<div class="t" style="left:1186.7px;top:908.34px;font:bold 12px 'Liberation Sans';color:#000;transform:scaleX(1.0760);transform-origin:0 0;">11.33</div>
<div class="a" style="left:0px;top:926px;width:1280px;height:34px;background:linear-gradient(#2a63d8 0,#3a80ee 1px,#4a90f2 2px,#2a6ae6 4px,#245fdc 8px,#2461dd 26px,#1f55c8 31px,#1a4ab8 34px)"></div>
<svg style="left:0;top:931px" width="98" height="29" viewBox="0 0 98 29"><defs><linearGradient id="st" x1="0" y1="0" x2="0" y2="1"><stop offset="0" stop-color="#58a858"/><stop offset=".12" stop-color="#3c9c3c"/><stop offset=".55" stop-color="#3aa43c"/><stop offset=".88" stop-color="#2e902e"/><stop offset="1" stop-color="#226e22"/></linearGradient></defs>
<path d="M0 0 L89 0 Q95.5 1 96.3 14.5 Q95.5 28 89 29 L0 29 Z" fill="url(#st)"/><path d="M1 1.5 L88 1.5" stroke="#a0d8a0" stroke-width="1" opacity=".5"/>
<path d="M0 1.5 L80 1.5" stroke="#8fd08a" stroke-width="1" opacity=".6"/>
<g transform="translate(11,5) skewY(-4)"><path d="M1 1 Q4.5 -0.5 9 1 L8 8 Q4 6.5 0 8Z" fill="#f05a20"/><path d="M10 1 Q14 2 18 1 L17 8 Q13 9 9 8Z" fill="#50c030"/><path d="M0 9 Q4 7.5 8 9 L7 16 Q3 14.5 -1 16Z" fill="#3070f0"/><path d="M9 9 Q13 10 17 9 L16 16 Q12 17 8 16Z" fill="#f8c020"/></g>
</svg>
<div class="t" style="left:35px;top:936.11px;font:bold italic 17px 'Liberation Sans';color:#fff;transform:scaleX(0.9879);transform-origin:0 0;text-shadow:1px 1px 1px #1a4a1a;">start</div>
<svg style="left:105px;top:935px" width="6" height="22"><rect x="1" y="0" width="2" height="2" fill="#1a40a0"/><rect x="2" y="1" width="1" height="1" fill="#7ab0ff"/><rect x="3" y="3" width="2" height="2" fill="#1a40a0"/><rect x="4" y="4" width="1" height="1" fill="#7ab0ff"/><rect x="1" y="6" width="2" height="2" fill="#1a40a0"/><rect x="2" y="7" width="1" height="1" fill="#7ab0ff"/><rect x="3" y="9" width="2" height="2" fill="#1a40a0"/><rect x="4" y="10" width="1" height="1" fill="#7ab0ff"/><rect x="1" y="12" width="2" height="2" fill="#1a40a0"/><rect x="2" y="13" width="1" height="1" fill="#7ab0ff"/><rect x="3" y="15" width="2" height="2" fill="#1a40a0"/><rect x="4" y="16" width="1" height="1" fill="#7ab0ff"/><rect x="1" y="18" width="2" height="2" fill="#1a40a0"/><rect x="2" y="19" width="1" height="1" fill="#7ab0ff"/></svg>
<div class="a" style="left:117px;top:933px;width:158px;height:24px;border-radius:3px;background:linear-gradient(#4a92f8,#3a7cf0 50%,#3477ea);border:1px solid #1e50c8;box-shadow:inset 1px 1px 0 #7ab4ff"></div>
<div class="a" style="left:277px;top:933px;width:158px;height:24px;border-radius:3px;background:linear-gradient(#4a92f8,#3a7cf0 50%,#3477ea);border:1px solid #1e50c8;box-shadow:inset 1px 1px 0 #7ab4ff"></div>
<svg style="left:127px;top:936px" width="15" height="18" viewBox="0 0 16 18"><path d="M2 6 C1 9 2 12 4 14.5 C6 17 8 17.5 9 16.5 C11 15 14 12 14.5 8.5 C15 6 13 4.5 10.5 4.8 C8 5 6 4.5 4 4.6 C3 4.8 2.3 5.2 2 6Z" fill="#d42a24"/><path d="M3 5 L5 2 L7 4.5 L9 1.5 L10 4.5 L13 3 L11.5 5.5 L8 6 Z" fill="#3c8a2a"/></svg>
<div class="t" style="left:145.2px;top:938.34px;font:normal 12px 'Liberation Sans';color:#fff;transform:scaleX(0.9155);transform-origin:0 0;">Ready Pro V14.6.16 -...</div>
<svg style="left:286px;top:937px" width="17" height="17" viewBox="0 0 16 16"><circle cx="8" cy="8" r="7.5" fill="#111"/><path d="M8 8 L8 1 A7 7 0 0 1 14.1 4.5Z M8 8 L14.1 11.5 A7 7 0 0 1 1.9 11.5 Z" fill="#f8e020"/><path d="M8 8 L1.9 4.5 A7 7 0 0 1 8 1Z" fill="#f8e020" transform="rotate(0)"/><circle cx="8" cy="8" r="1.8" fill="#f8e020" stroke="#111" stroke-width=".8"/></svg>
<div class="t" style="left:306px;top:938.34px;font:normal 12px 'Liberation Sans';color:#fff;transform:scaleX(0.8500);transform-origin:0 0;">Uranium Backup</div>
<div class="a" style="left:1025px;top:930px;width:255px;height:30px;background:linear-gradient(#17a2f2 0,#0f8ee8 3px,#1196ec 20px,#0d84d8 30px);border-left:1px solid #0b5cb8;box-shadow:inset 1px 0 0 #3ec0ff"></div>
<svg style="left:1036px;top:937px" width="17" height="17" viewBox="0 0 16 16"><path d="M3 3 Q8 0 13 3 Q16 8 13 13 Q8 16 3 13 Q0 8 3 3Z" fill="#e8e8e8" stroke="#aaa"/><path d="M5 5 L11 11 M11 5 L5 11" stroke="#999" stroke-width="1.8"/></svg>
<svg style="left:1054px;top:937px" width="17" height="17" viewBox="0 0 16 16"><rect x="0" y="3" width="16" height="10" fill="#e01010"/><text x="8" y="11.5" font-family="Liberation Sans" font-weight="bold" font-style="italic" font-size="8.5" fill="#fff" text-anchor="middle">ATI</text></svg>
<svg style="left:1072px;top:937px" width="17" height="17" viewBox="0 0 16 16"><rect x="1" y="1" width="14" height="15" fill="#8a1a1a" stroke="#ccc" stroke-width=".8"/><circle cx="8" cy="6" r="2.5" fill="none" stroke="#fff" stroke-width="1.4"/><path d="M8 8.5 V14 M8 11 H10 M8 13 H10" stroke="#fff" stroke-width="1.2"/></svg>
<svg style="left:1090px;top:937px" width="17" height="17" viewBox="0 0 16 16"><circle cx="8" cy="8" r="7.5" fill="#111"/><path d="M8 8 L8 1 A7 7 0 0 1 14.1 4.5Z M8 8 L14.1 11.5 A7 7 0 0 1 1.9 11.5 Z M8 8 L1.9 4.5 A7 7 0 0 1 8 1Z" fill="#f0d820" transform="rotate(30 8 8)"/><circle cx="11.5" cy="12" r="4" fill="#fff" stroke="#e01010" stroke-width="1.6"/></svg>
<svg style="left:1108px;top:937px" width="17" height="17" viewBox="0 0 16 16"><path d="M1 1 L4 1 L4 15 L1 15Z M4 8 L11 1 L15 1 L8 8 L15 15 L11 15Z" fill="#e01a30"/><rect x="9" y="9" width="7" height="6" fill="#444"/></svg>
<svg style="left:1125px;top:937px" width="17" height="17" viewBox="0 0 16 16"><path d="M2 5 H6 L11 1 V15 L6 11 H2Z" fill="#d84a30" stroke="#7a1a10" stroke-width=".6"/><path d="M13 4 Q15 8 13 12" stroke="#222" stroke-width="1.2" fill="none"/></svg>
<svg style="left:1143px;top:937px" width="17" height="17" viewBox="0 0 16 16"><circle cx="5" cy="4" r="2.5" fill="#60c060"/><circle cx="10" cy="3.5" r="2.5" fill="#4080e0"/><path d="M1 13 Q1 7 5 7 Q9 7 9 13Z" fill="#60b060"/><path d="M6 12 Q6 6 10 6 Q14 6 14 12Z" fill="#3070d0"/><circle cx="12" cy="12.5" r="3.5" fill="#e02020" stroke="#fff" stroke-width=".8"/><path d="M10.5 11 L13.5 14 M13.5 11 L10.5 14" stroke="#fff" stroke-width="1"/></svg>
<svg style="left:1161px;top:937px" width="17" height="17" viewBox="0 0 16 16"><circle cx="8" cy="8" r="7" fill="#e03030" stroke="#a01010"/><path d="M3 6 Q8 3 13 6 M3 10 Q8 13 13 10 M8 1 Q4 8 8 15" stroke="#ff9090" fill="none"/></svg>
<svg style="left:1179px;top:937px" width="17" height="17" viewBox="0 0 16 16"><path d="M3 12 Q3 4 8 3 Q13 4 13 12 L15 13 L1 13Z" fill="#e8c830" stroke="#8a7010" stroke-width=".7"/><circle cx="8" cy="14.5" r="1.5" fill="#8a7010"/></svg>
<svg style="left:1197px;top:937px" width="17" height="17" viewBox="0 0 16 16"><rect x="1" y="5" width="9" height="7" fill="#7080e0" stroke="#224" stroke-width=".6"/><rect x="6" y="1" width="9" height="7" fill="#8090f0" stroke="#224" stroke-width=".6"/><rect x="3" y="12.5" width="6" height="2" fill="#445"/></svg>
<svg style="left:1215px;top:937px" width="17" height="17" viewBox="0 0 16 16"><path d="M3 2 L9 2 L9 0 L13 4 L9 8 L9 6 L5 6Z" fill="#30c030"/><rect x="2" y="8" width="12" height="7" fill="#9a9aa0" stroke="#333" stroke-width=".6" transform="rotate(-15 8 11)"/></svg>
<div class="t" style="left:1239.2px;top:939.34px;font:normal 12px 'Liberation Sans';color:#fff;transform:scaleX(0.9369);transform-origin:0 0;">11.33</div>
</body></html>
